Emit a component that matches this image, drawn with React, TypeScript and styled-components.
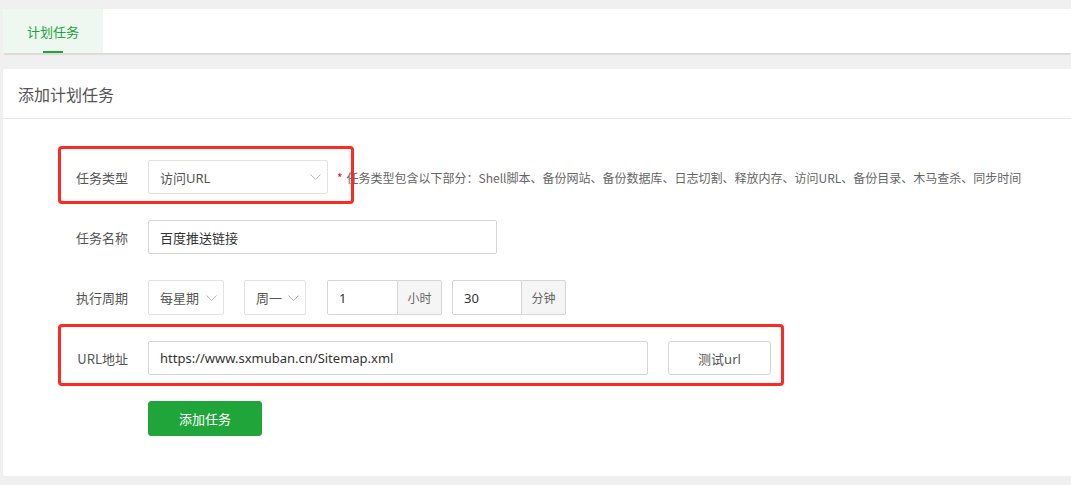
import React from 'react'
import styled, { createGlobalStyle } from 'styled-components'

const GlobalStyle = createGlobalStyle`
  html, body {
    margin: 0;
    padding: 0;
    background: #f0f0f0;
  }
  body {
    font-family: "Noto Sans", "Noto Sans CJK SC", sans-serif;
    font-size: 13px;
    color: #333;
  }
  * {
    box-sizing: border-box;
  }
`;

const Page = styled.div`
  padding: 9px 0 9px 3px;
`;

const TabBar = styled.div`
  display: flex;
  height: 44px;
  background: #fff;
  border-radius: 2px 0 0 2px;
  box-shadow: 0 3px 1px -1px rgba(0, 0, 0, 0.09);
  margin-bottom: 16px;
`;

const Tab = styled.div<{ $active?: boolean }>`
  position: relative;
  width: 100px;
  display: flex;
  align-items: center;
  justify-content: center;
  color: ${({ $active }) => ($active ? '#20a53a' : '#666')};
  background: ${({ $active }) => ($active ? '#eff8f0' : 'transparent')};
  font-family: "Noto Sans CJK SC", sans-serif;
  font-size: 13px;

  &::after {
    content: '';
    display: ${({ $active }) => ($active ? 'block' : 'none')};
    position: absolute;
    left: 40px;
    bottom: 0;
    width: 20px;
    height: 2px;
    background: #20a53a;
  }
`;

const Card = styled.div`
  background: #fff;
  border-radius: 2px 0 0 2px;
`;

const CardHeader = styled.div`
  height: 50px;
  padding-left: 15px;
  display: flex;
  align-items: center;
  font-family: "Noto Sans CJK SC", sans-serif;
  font-size: 16px;
  color: #555;
  border-bottom: 1px solid #e8e8e8;
`;

const Form = styled.div`
  display: flex;
  flex-direction: column;
  gap: 26px;
  padding: 41px 0 40px 20px;
`;

const Row = styled.div<{ $h?: number }>`
  position: relative;
  display: flex;
  align-items: stretch;
  height: ${({ $h }) => $h ?? 34}px;
`;

const Label = styled.div`
  width: 105px;
  margin-right: 20px;
  display: flex;
  align-items: center;
  justify-content: flex-end;
  color: #555;
  font-family: "Noto Sans CJK SC", sans-serif;
  font-size: 13px;
`;

const Mark = styled.div<{ $top: number; $width: number; $height: number }>`
  position: absolute;
  left: 35px;
  top: ${({ $top }) => $top}px;
  width: ${({ $width }) => $width}px;
  height: ${({ $height }) => $height}px;
  border: 3px solid #fb2b22;
  border-radius: 4px;
  pointer-events: none;
`;

const Select = styled.div<{ $width: number; $gap?: number }>`
  position: relative;
  width: ${({ $width }) => $width}px;
  margin-right: ${({ $gap }) => $gap ?? 0}px;
  border: 1px solid #e2e2e2;
  border-radius: 2px;
  display: flex;
  align-items: center;
  padding-left: 11px;
  color: #555;
  font-family: "Noto Sans", "Noto Sans CJK SC", sans-serif;
  font-size: 13px;
`;

const Chevron = styled.svg`
  position: absolute;
  right: 6px;
  top: 50%;
  margin-top: -3px;
`;

const Input = styled.div<{ $width: number }>`
  width: ${({ $width }) => $width}px;
  border: 1px solid #d5d5d5;
  border-radius: 2px;
  display: flex;
  align-items: center;
  padding-left: 11px;
  color: #333;
  font-family: "Noto Sans", "Noto Sans CJK SC", sans-serif;
  font-size: 13px;
`;

const Group = styled.div<{ $gap?: number }>`
  display: flex;
  margin-right: ${({ $gap }) => $gap ?? 0}px;

  ${Input} {
    border-radius: 2px 0 0 2px;
  }
`;

const Addon = styled.div`
  width: 44px;
  border: 1px solid #d5d5d5;
  border-left: none;
  border-radius: 0 2px 2px 0;
  background: #f5f5f5;
  display: flex;
  align-items: center;
  justify-content: center;
  color: #666;
  font-family: "Noto Sans CJK SC", sans-serif;
  font-size: 12px;
`;

const Hint = styled.div`
  display: flex;
  align-items: center;
  margin-left: 9px;
  color: #666;
  font-family: "Noto Sans CJK SC", sans-serif;
  font-size: 12px;
  white-space: nowrap;

  span {
    color: #f03;
    margin-right: 4px;
  }
`;

const Button = styled.button<{ $primary?: boolean; $width: number }>`
  width: ${({ $width }) => $width}px;
  height: ${({ $primary }) => ($primary ? '35px' : 'auto')};
  margin-left: ${({ $primary }) => ($primary ? 0 : 20)}px;
  border-radius: 3px;
  border: 1px solid ${({ $primary }) => ($primary ? '#20a53a' : '#d5d5d5')};
  background: ${({ $primary }) => ($primary ? '#20a53a' : '#fff')};
  color: ${({ $primary }) => ($primary ? '#fff' : '#555')};
  font-family: "Noto Sans", "Noto Sans CJK SC", sans-serif;
  font-size: 13px;
  cursor: pointer;
`;

const ButtonRow = styled.div`
  padding-left: 125px;
`;

const Arrow = () => (
  <Chevron width="11" height="6" viewBox="0 0 11 6">
    <path d="M0.5 0.5l5 5 5-5" fill="none" stroke="#b8b8b8" strokeWidth="1" />
  </Chevron>
);

const SmallSelect = ({ value, width, gap }: { value: string; width: number; gap: number }) => (
  <Select $width={width} $gap={gap}>
    {value}
    <Arrow />
  </Select>
);

export default function App() {
  return (
    <>
      <GlobalStyle />
      <Page>
        <TabBar>
          <Tab $active>计划任务</Tab>
        </TabBar>
        <Card>
          <CardHeader>添加计划任务</CardHeader>
          <Form>
            <Row>
              <Mark $top={-14} $width={296} $height={58} />
              <Label>任务类型</Label>
              <Select $width={180}>
                访问URL
                <Arrow />
              </Select>
              <Hint>
                <span>*</span>任务类型包含以下部分：Shell脚本、备份网站、备份数据库、日志切割、释放内存、访问URL、备份目录、木马查杀、同步时间
              </Hint>
            </Row>
            <Row>
              <Label>任务名称</Label>
              <Input $width={349}>百度推送链接</Input>
            </Row>
            <Row $h={35}>
              <Label>执行周期</Label>
              <SmallSelect value="每星期" width={76} gap={20} />
              <SmallSelect value="周一" width={62} gap={21} />
              <Group $gap={10}>
                <Input $width={71}>1</Input>
                <Addon>小时</Addon>
              </Group>
              <Group>
                <Input $width={70}>30</Input>
                <Addon>分钟</Addon>
              </Group>
            </Row>
            <Row>
              <Mark $top={-17} $width={726} $height={62} />
              <Label>URL地址</Label>
              <Input $width={500}>https://www.sxmuban.cn/Sitemap.xml</Input>
              <Button $width={103}>测试url</Button>
            </Row>
            <ButtonRow>
              <Button $primary $width={114}>添加任务</Button>
            </ButtonRow>
          </Form>
        </Card>
      </Page>
    </>
  );
}
